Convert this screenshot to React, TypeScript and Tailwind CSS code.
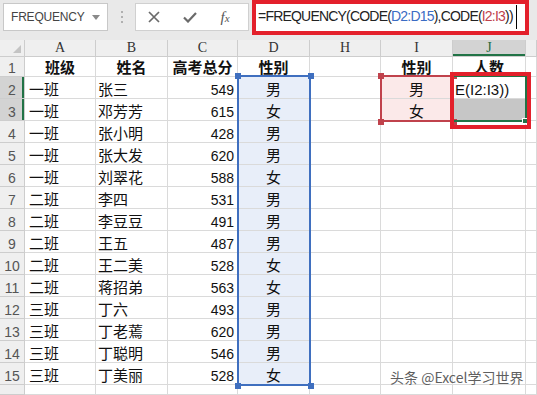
import React from "react";

const data: [string, string, string, string][] = [
  ["一班", "张三", "549", "男"],
  ["一班", "邓芳芳", "615", "女"],
  ["一班", "张小明", "428", "男"],
  ["一班", "张大发", "620", "男"],
  ["一班", "刘翠花", "588", "女"],
  ["二班", "李四", "531", "男"],
  ["二班", "李豆豆", "491", "男"],
  ["二班", "王五", "487", "男"],
  ["二班", "王二美", "528", "女"],
  ["二班", "蒋招弟", "563", "女"],
  ["三班", "丁六", "493", "男"],
  ["三班", "丁老蔫", "620", "男"],
  ["三班", "丁聪明", "546", "男"],
  ["三班", "丁美丽", "528", "女"],
];

const cell = "border-r border-b border-[#dadada] flex items-end overflow-visible whitespace-nowrap";
const colHead =
  "border-r border-b border-[#cdcdcd] bg-[#efefef] flex items-end justify-center pb-[1px] font-['Liberation_Serif',serif] text-[14px] leading-[15px] text-[#333]";
const rowHead =
  "border-r border-b border-[#cdcdcd] bg-[#efefef] flex items-end justify-center font-['Liberation_Sans',sans-serif] text-[14px] leading-[16px] text-[#555]";

function Handle({ className }: { className: string }) {
  return <div className={"absolute w-[6px] h-[6px] " + className} />;
}

export default function App() {
  return (
    <div className="relative w-[537px] h-[395px] overflow-hidden bg-white font-['Liberation_Sans','Noto_Sans_CJK_SC',sans-serif]">
      {/* formula bar */}
      <div className="flex items-start h-[40px] bg-[#e9e9e9]">
        <div className="ml-[3px] mt-[3px] w-[105px] h-[28px] bg-white border border-[#c8c8c8] flex items-center pl-[7px] pr-[7px]">
          <span className="text-[12px] text-[#444] tracking-[-0.2px]">FREQUENCY</span>
          <svg className="ml-auto" width="8" height="5" viewBox="0 0 8 5">
            <path d="M0 0 L8 0 L4 5 Z" fill="#8a8a8a" />
          </svg>
        </div>
        <div className="w-[27px] h-[34px] flex flex-col items-center justify-center gap-[3px]">
          <div className="w-[2px] h-[2px] bg-[#b0b0b0]" />
          <div className="w-[2px] h-[2px] bg-[#b0b0b0]" />
          <div className="w-[2px] h-[2px] bg-[#b0b0b0]" />
        </div>
        <div className="mt-[3px] w-[114px] h-[28px] bg-white border border-[#d0d0d0] flex items-center">
          <div className="w-[36px] flex justify-center">
            <svg width="12" height="12" viewBox="0 0 12 12">
              <path d="M1 1 L11 11 M11 1 L1 11" stroke="#6a6a6a" strokeWidth="1.7" />
            </svg>
          </div>
          <div className="w-[35px] flex justify-center">
            <svg width="14" height="11" viewBox="0 0 14 11">
              <path d="M1 5.5 L5 9.5 L13 1" stroke="#6a6a6a" strokeWidth="2.2" fill="none" />
            </svg>
          </div>
          <div className="w-[36px] flex justify-center">
            <span className="font-['Liberation_Serif',serif] italic text-[15px] leading-[16px] text-[#555]">
              f<span className="text-[11px]">x</span>
            </span>
          </div>
        </div>
        <div className="ml-[3px] w-[277px] h-[35px] border-[4px] border-[#e3202b] bg-white flex items-start pl-[2px] pt-[1px]">
          <span className="text-[14px] leading-[22px] tracking-[-0.8px] text-[#222] whitespace-nowrap">
            =FREQUENCY(CODE(<span className="text-[#3b6cc4]">D2:D15</span>),CODE(
            <span className="text-[#c0424c]">I2:I3</span>))
          </span>
          <div className="ml-[3px] mt-[0px] w-[1px] h-[24px] bg-black" />
        </div>
      </div>

      {/* sheet grid */}
      <div className="grid grid-cols-[25px_71px_72px_70px_72px_71px_72px_73px_11px] grid-rows-[17px_20px_repeat(14,22px)_10px]">
        {/* column headers */}
        <div className="relative border-r border-b border-[#cdcdcd] bg-[#efefef]">
          <svg className="absolute right-[3px] bottom-[3px]" width="8" height="8" viewBox="0 0 8 8">
            <path d="M8 0 L8 8 L0 8 Z" fill="#c4c4c4" />
          </svg>
        </div>
        <div className={colHead}>A</div>
        <div className={colHead}>B</div>
        <div className={colHead}>C</div>
        <div className={colHead}>D</div>
        <div className={colHead}>H</div>
        <div className={colHead}>I</div>
        <div className={colHead + " !bg-[#d3d3d3] !text-[#1e6b41] shadow-[inset_0_-2px_0_#217346]"}>J</div>
        <div className={colHead}></div>

        {/* row 1 */}
        <div className={rowHead}>1</div>
        {["班级", "姓名", "高考总分", "性别", "", "性别", "人数", ""].map((t, i) => (
          <div key={i} className={cell + " justify-center font-bold text-[15px] leading-[16px] text-[#111]"}>
            {t}
          </div>
        ))}

        {/* data rows */}
        {data.map((r, i) => {
          const n = i + 2;
          const sel = n === 2 || n === 3;
          return (
            <React.Fragment key={n}>
              <div className={rowHead + (sel ? " !bg-[#d3d3d3] shadow-[inset_-2px_0_0_#217346]" : "")}>{n}</div>
              <div className={cell + " pl-[4px] text-[15px] leading-[16px] text-[#111]"}>{r[0]}</div>
              <div className={cell + " pl-[2px] text-[15px] leading-[16px] text-[#111]"}>{r[1]}</div>
              <div className={cell + " justify-end pr-[3px] text-[14px] leading-[16px] text-[#111]"}>{r[2]}</div>
              <div className={cell + " justify-center bg-[#e8eef9] text-[15px] leading-[16px] text-[#111]"}>{r[3]}</div>
              <div className={cell}></div>
              <div
                className={
                  cell + " justify-center text-[15px] leading-[16px] text-[#111]" + (sel ? " bg-[#fbe9e9]" : "")
                }
              >
                {n === 2 ? "男" : n === 3 ? "女" : ""}
              </div>
              <div
                className={
                  cell +
                  " pl-[2px] text-[15px] leading-[17px] text-[#111]" +
                  (n === 3 ? " bg-[#c6c6c6]" : "")
                }
              >
                {n === 2 ? "E(I2:I3))" : ""}
              </div>
              <div className={cell}></div>
            </React.Fragment>
          );
        })}

        {/* row 16 partial */}
        <div className={rowHead}></div>
        {Array.from({ length: 8 }).map((_, i) => (
          <div key={i} className={cell}></div>
        ))}
      </div>

      {/* D2:D15 reference highlight */}
      <div className="absolute left-[237px] top-[75px] w-[74px] h-[311px] border-2 border-[#3f6fbf]" />
      <Handle className="left-[235px] top-[73px] bg-[#3f6fbf]" />
      <Handle className="left-[308px] top-[73px] bg-[#3f6fbf]" />
      <Handle className="left-[235px] top-[383px] bg-[#3f6fbf]" />
      <Handle className="left-[308px] top-[383px] bg-[#3f6fbf]" />

      {/* I2:I3 reference highlight */}
      <div className="absolute left-[380px] top-[75px] w-[74px] h-[47px] border-2 border-[#c0424c]" />
      <Handle className="left-[378px] top-[73px] bg-[#c0424c]" />
      <Handle className="left-[451px] top-[73px] bg-[#c0424c]" />
      <Handle className="left-[378px] top-[119px] bg-[#c0424c]" />
      <Handle className="left-[451px] top-[119px] bg-[#c0424c]" />

      {/* J2:J3 active selection */}
      <div className="absolute left-[452px] top-[75px] w-[75px] h-[47px] border-2 border-[#217346]" />
      <Handle className="left-[522px] top-[118px] bg-[#217346] border border-white" />

      {/* red annotation box */}
      <div className="absolute left-[450px] top-[72px] w-[81px] h-[57px] border-[4px] border-[#e3202b]" />

      {/* watermark */}
      <div className="absolute left-[390px] top-[369px] text-[14px] leading-[16px] text-[#5f5f5f] whitespace-nowrap font-['Noto_Sans_CJK_SC',sans-serif] [text-shadow:0_0_2px_#fff]">
        头条 @Excel学习世界
      </div>
    </div>
  );
}
